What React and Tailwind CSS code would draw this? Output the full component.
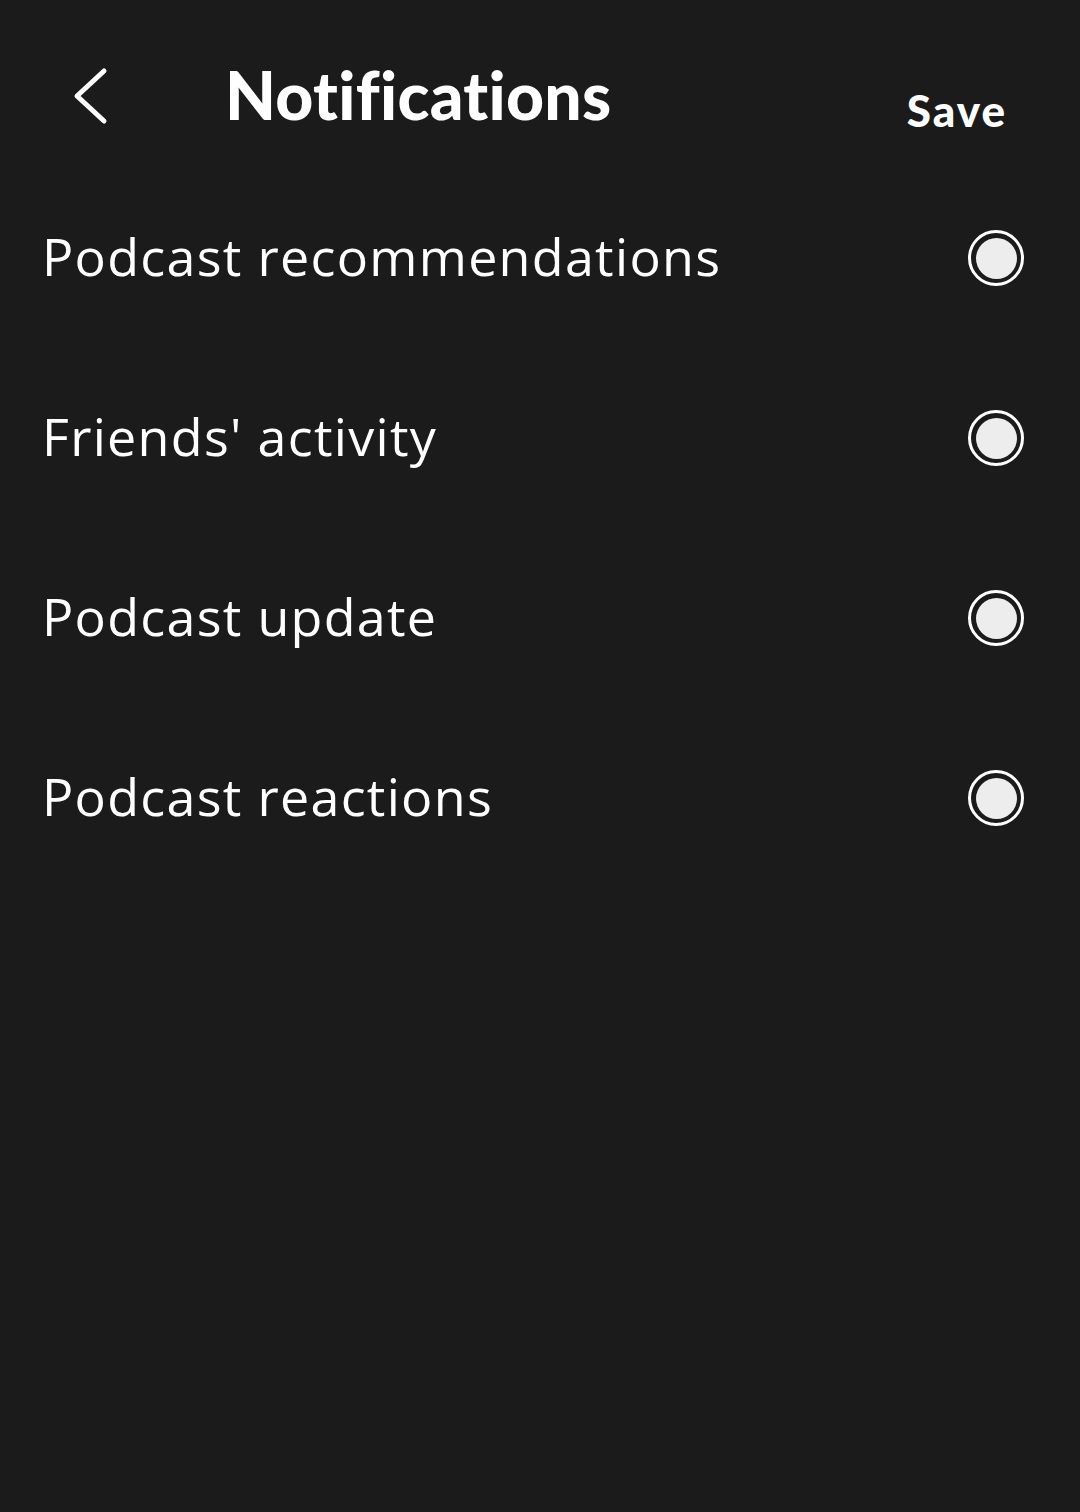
export default function App() {
  const items = [
    "Podcast recommendations",
    "Friends' activity",
    "Podcast update",
    "Podcast reactions",
  ];

  return (
    <div
      className="w-[1080px] h-[1512px] bg-[#1b1b1b] text-white overflow-hidden [font-variant-ligatures:none]"
      style={{ fontFamily: "Lato, 'Open Sans', sans-serif" }}
    >
      {/* header */}
      <div className="flex items-start h-[170px] pt-[66px] pl-[70px] pr-[73px]">
        <button className="w-[42px] h-[60px] flex items-center justify-center">
          <svg width="42" height="60" viewBox="0 0 42 60" fill="none">
            <path
              d="M34 5 L7 30 L34 55"
              stroke="white"
              strokeWidth="5"
              strokeLinecap="round"
              strokeLinejoin="round"
            />
          </svg>
        </button>
        <h1 className="ml-[113px] -mt-[2px] text-[66px] leading-[62px] font-black tracking-[0.3px]">
          Notifications
        </h1>
        <button className="ml-auto mt-[20px] text-[44px] leading-[48px] font-black tracking-[2px]">
          Save
        </button>
      </div>

      {/* list */}
      <div className="flex flex-col pl-[42px] pr-[56px] -mt-[2px]">
        {items.map((label) => (
          <div key={label} className="flex items-center justify-between h-[180px]">
            <span
              className="text-[52px] leading-none font-normal tracking-[1.3px] -mt-[4px]"
              style={{ fontFamily: "'Open Sans', sans-serif" }}
            >
              {label}
            </span>
            <span className="w-[56px] h-[56px] rounded-full bg-[#1b1b1b] border-[3.5px] border-white flex items-center justify-center">
              <span className="w-[41px] h-[41px] rounded-full bg-[#ededed]" />
            </span>
          </div>
        ))}
      </div>
    </div>
  );
}
